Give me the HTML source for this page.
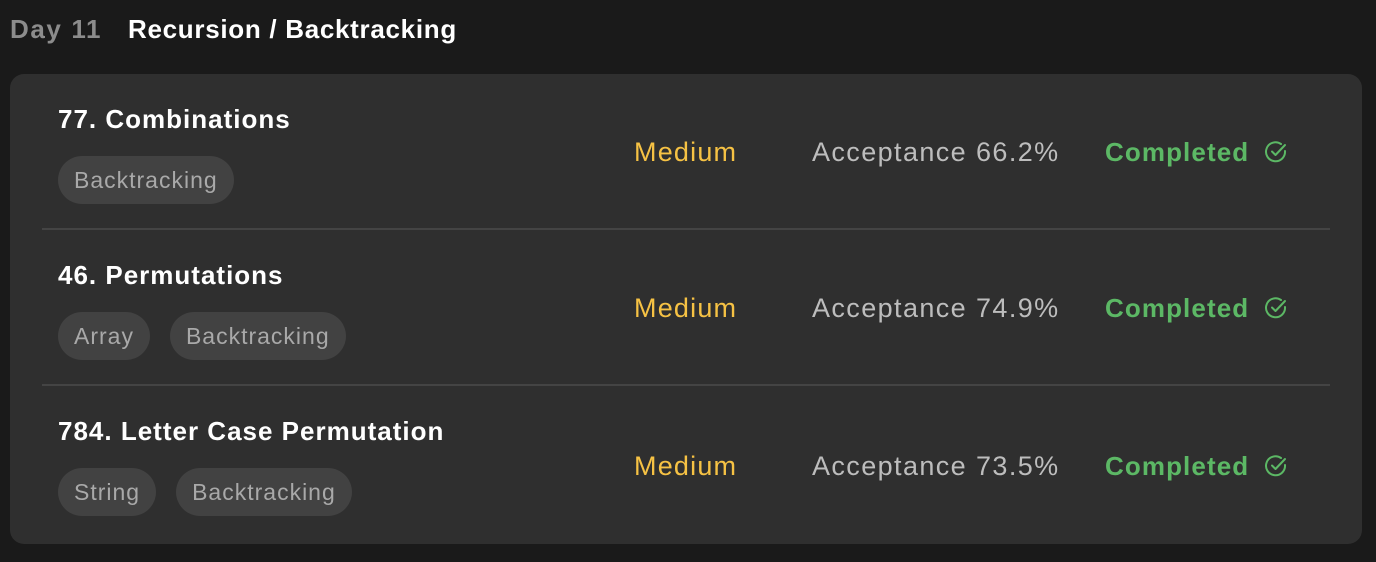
<!DOCTYPE html>
<html><head><style>
body{margin:0;background:#1a1a1a;width:1376px;height:562px;overflow:hidden;font-family:"Liberation Sans",sans-serif;position:relative}
.h{position:absolute;top:12px;font-size:26px;font-weight:600;line-height:34px}
.card{position:absolute;left:10px;top:74px;width:1352px;height:470px;background:#2f2f2f;border-radius:14px}
.row{position:absolute;left:0;width:1352px;height:156px}
.t{position:absolute;left:48px;top:28px;font-size:26px;font-weight:600;color:#fff;line-height:34px;letter-spacing:1px}
.tags{position:absolute;left:48px;top:82px;display:flex;gap:20px}
.tag{height:48px;line-height:48px;padding:0 16px;background:#424242;border-radius:24px;color:#a9a9a9;font-size:23px;letter-spacing:1px}
.m{position:absolute;left:624px;top:61px;font-size:27px;color:#f6c244;line-height:34px;letter-spacing:1.2px}
.a{position:absolute;left:802px;top:61px;font-size:27px;color:#bdbdbd;line-height:34px;letter-spacing:1.4px}
.c{position:absolute;left:1095px;top:61px;font-size:26px;color:#5cb865;line-height:34px;font-weight:600;letter-spacing:1.1px}
.ic{position:absolute;left:1254px;top:66px}
.div{position:absolute;left:32px;width:1288px;height:2px;background:#444}
</style></head><body>
<div class="h" style="left:10px;color:#8c8c8c;letter-spacing:1.6px">Day 11</div>
<div class="h" style="left:128px;color:#fff;letter-spacing:0.7px">Recursion / Backtracking</div>
<div class="card">
 <div class="row" style="top:0">
  <div class="t">77. Combinations</div>
  <div class="tags"><div class="tag">Backtracking</div></div>
  <div class="m">Medium</div><div class="a">Acceptance 66.2%</div><div class="c">Completed</div>
  <svg class="ic" width="24" height="24" viewBox="0 0 24 24" fill="none" stroke="#5cb865" stroke-width="2" stroke-linecap="round" stroke-linejoin="round"><path d="M21 11a9.5 9.5 0 1 1-4-7"/><path d="M8 11.5l3.5 3.5L21 5"/></svg>
 </div>
 <div class="div" style="top:154px"></div>
 <div class="row" style="top:156px">
  <div class="t">46. Permutations</div>
  <div class="tags"><div class="tag">Array</div><div class="tag">Backtracking</div></div>
  <div class="m">Medium</div><div class="a">Acceptance 74.9%</div><div class="c">Completed</div>
  <svg class="ic" width="24" height="24" viewBox="0 0 24 24" fill="none" stroke="#5cb865" stroke-width="2" stroke-linecap="round" stroke-linejoin="round"><path d="M21 11a9.5 9.5 0 1 1-4-7"/><path d="M8 11.5l3.5 3.5L21 5"/></svg>
 </div>
 <div class="div" style="top:310px"></div>
 <div class="row" style="top:312px">
  <div class="t">784. Letter Case Permutation</div>
  <div class="tags"><div class="tag">String</div><div class="tag">Backtracking</div></div>
  <div class="m" style="top:63px">Medium</div><div class="a" style="top:63px">Acceptance 73.5%</div><div class="c" style="top:63px">Completed</div>
  <svg class="ic" style="top:68px" width="24" height="24" viewBox="0 0 24 24" fill="none" stroke="#5cb865" stroke-width="2" stroke-linecap="round" stroke-linejoin="round"><path d="M21 11a9.5 9.5 0 1 1-4-7"/><path d="M8 11.5l3.5 3.5L21 5"/></svg>
 </div>
</div>
</body></html>
